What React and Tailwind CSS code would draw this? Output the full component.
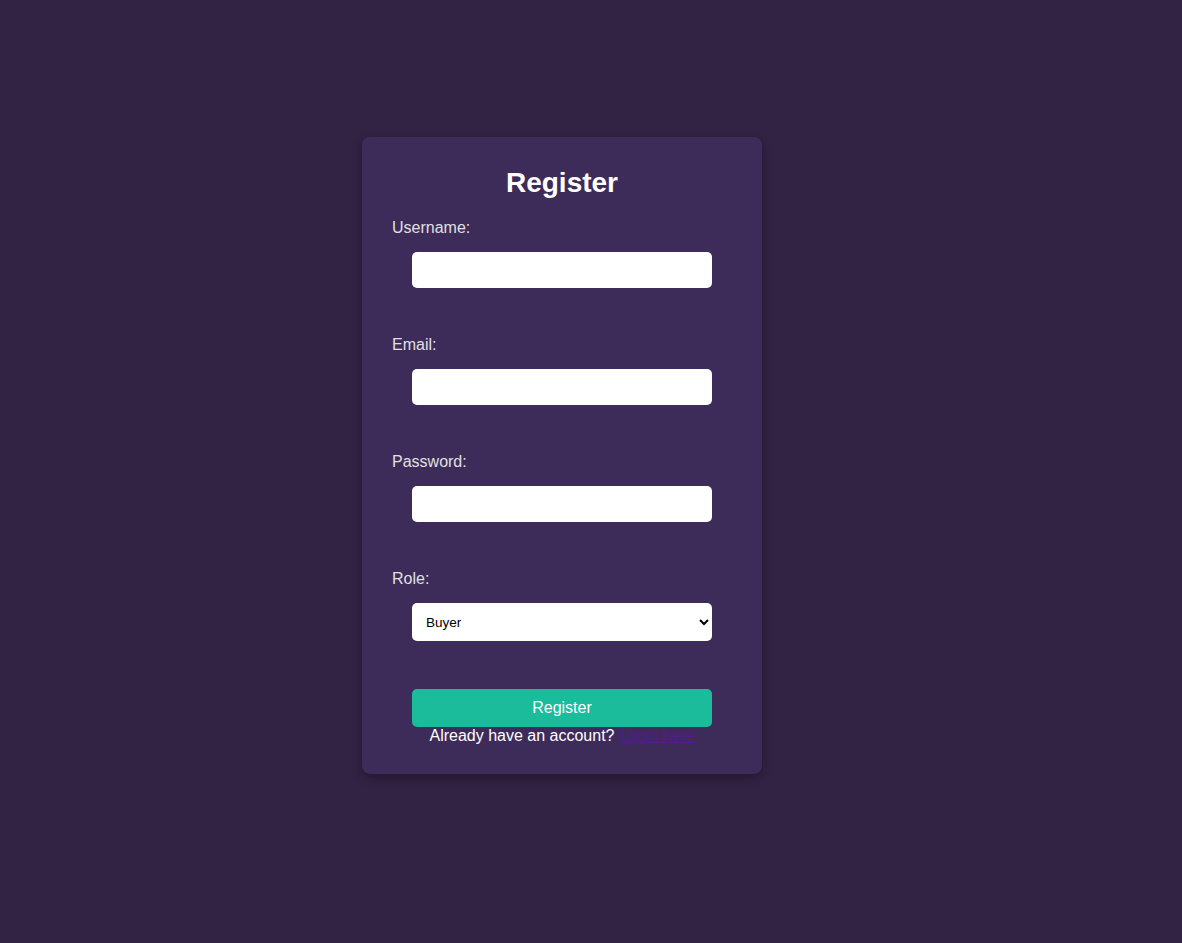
import React, { useState } from 'react';

const Field = ({ label, children }) => (
  <div className="mb-[47px]">
    <label className="block pt-px text-[16px] leading-[18px] text-[#e0e0e0]">{label}</label>
    <div className="mt-[15px] px-5">{children}</div>
  </div>
);

const App = () => {
  const [role, setRole] = useState('buyer');

  return (
    <div
      className="min-h-[943px] w-full bg-[#322244] pt-[137px]"
      style={{ fontFamily: '"Liberation Sans", Arial, sans-serif' }}
    >
      <div className="ml-[362px] w-[400px] rounded-lg bg-[#3d2b5a] px-[30px] pt-[30px] pb-[29px] shadow-[0_4px_10px_rgba(0,0,0,0.3)]">
        <h2 className="text-center text-[28px] leading-[32px] font-bold text-white mb-[19px]">Register</h2>

        <Field label="Username:">
          <input type="text" className="block h-9 w-full rounded-[5px] bg-white px-2 text-black outline-none" />
        </Field>
        <Field label="Email:">
          <input type="email" className="block h-9 w-full rounded-[5px] bg-white px-2 text-black outline-none" />
        </Field>
        <Field label="Password:">
          <input type="password" className="block h-9 w-full rounded-[5px] bg-white px-2 text-black outline-none" />
        </Field>

        <div>
          <label className="block pt-px text-[16px] leading-[18px] text-[#e0e0e0]">Role:</label>
          <div className="mt-[15px] px-5">
            <select
              value={role}
              onChange={(e) => setRole(e.target.value)}
              className="block h-[38px] w-full rounded-[5px] bg-white pl-[10px] pr-1 text-[13.5px] text-black outline-none"
            >
              <option value="buyer">Buyer</option>
              <option value="seller">Seller</option>
            </select>
          </div>
        </div>

        <div className="mt-12 px-5">
          <button className="block h-[38px] w-full rounded-[5px] bg-[#1abc9c] text-[16px] text-white">Register</button>
        </div>
        <p className="text-center text-[16px] leading-[18px] text-white">
          Already have an account? <a href="#" className="text-[#551a8b] underline">Login here</a>
        </p>
      </div>
    </div>
  );
};

export default App;
